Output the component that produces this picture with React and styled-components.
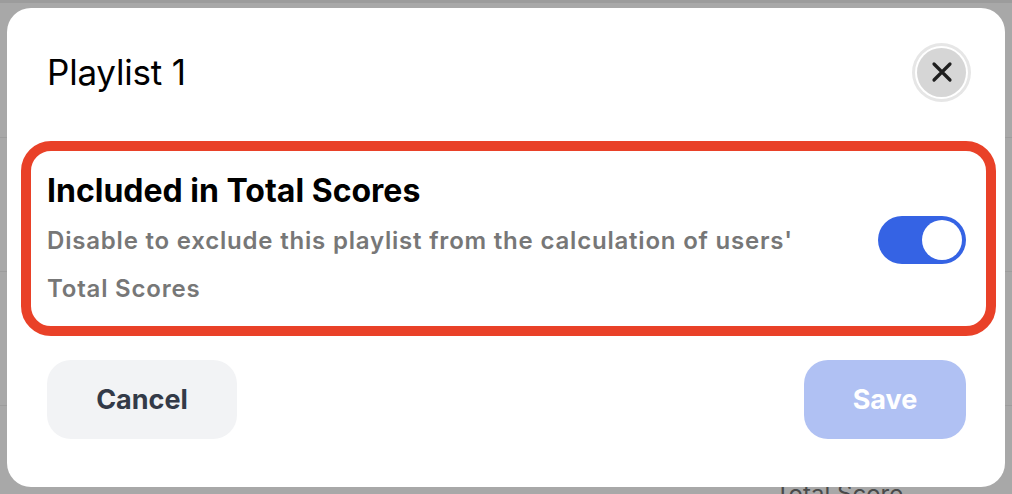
import styled, { createGlobalStyle } from 'styled-components'

const Global = createGlobalStyle`
    html, body {
        margin: 0;
        padding: 0;
        background: #a8a8a8;
        font-family: Inter, "Noto Sans", sans-serif;
    }
`

const Page = styled.div`
    position: relative;
    width: 1012px;
    height: 494px;
    overflow: hidden;
    background: #a8a8a8;
`

const TopStrip = styled.div`
    height: 3px;
    background: #9c9c9c;
`

const BackRow = styled.div`
    height: ${({ h }) => h}px;
    border-bottom: 1px solid #9d9d9d;
    box-sizing: border-box;
`

const BackLabel = styled.div`
    padding-left: 775px;
    margin-top: 73px;
    font-size: 24px;
    color: #4a4a4a;
    white-space: nowrap;
`

const Modal = styled.div`
    position: absolute;
    left: 7px;
    top: 8px;
    width: 998px;
    height: 479px;
    box-sizing: border-box;
    background: #fff;
    border-radius: 24px;
    padding: 40px 39px 0 40px;
    display: flex;
    flex-direction: column;
`

const Header = styled.div`
    display: flex;
    align-items: center;
    justify-content: space-between;
    height: 48px;
`

const Title = styled.h1`
    margin: 0;
    font-size: 35px;
    font-weight: 400;
    color: #000;
    letter-spacing: -0.2px;
`

const CloseButton = styled.button`
    width: 49px;
    height: 49px;
    border: none;
    border-radius: 50%;
    background: #d6d6d6;
    box-shadow: 0 0 0 2px #fff, 0 0 0 5px #e6e6e6;
    display: flex;
    align-items: center;
    justify-content: center;
    padding: 0;
`

const Highlight = styled.div`
    margin: 45px -30px 0 -26px;
    border: 10px solid #e94128;
    border-radius: 30px;
    padding: 21px 20px 13px 16px;
    display: flex;
    align-items: flex-start;
    justify-content: space-between;
`

const TextBlock = styled.div`
    display: flex;
    flex-direction: column;
`

const SettingTitle = styled.div`
    font-size: 32px;
    font-weight: 700;
    color: #000;
    line-height: 38px;
`

const SettingDesc = styled.div`
    margin-top: 7px;
    width: 790px;
    font-size: 24px;
    letter-spacing: 0.8px;
    font-weight: 600;
    color: #777;
    line-height: 48px;
`

const Switch = styled.div`
    margin-top: 44px;
    width: 88px;
    height: 48px;
    border-radius: 24px;
    background: #3563e4;
    display: flex;
    align-items: center;
    justify-content: ${({ on }) => (on ? 'flex-end' : 'flex-start')};
    padding: 4px;
    box-sizing: border-box;
`

const Knob = styled.div`
    width: 40px;
    height: 40px;
    border-radius: 50%;
    background: #fff;
`

const Footer = styled.div`
    margin-top: 24px;
    display: flex;
    justify-content: space-between;
`

const Button = styled.button`
    height: 79px;
    width: ${({ w }) => w}px;
    border: none;
    border-radius: 24px;
    font-family: Inter, "Noto Sans", sans-serif;
    font-size: 27px;
    font-weight: 700;
    background: ${({ primary }) => (primary ? '#b0c1f3' : '#f2f3f5')};
    color: ${({ primary }) => (primary ? '#fff' : '#333a48')};
`

function App() {
    return (
        <>
            <Global />
            <Page>
                <TopStrip />
                <BackRow h={135} />
                <BackRow h={134} />
                <BackRow h={134} />
                <BackLabel>Total Score</BackLabel>
                <Modal>
                    <Header>
                        <Title>Playlist 1</Title>
                        <CloseButton aria-label="Close">
                            <svg width="22" height="22" viewBox="0 0 22 22">
                                <path d="M3 3 L19 19 M19 3 L3 19" stroke="#1e1e1e" strokeWidth="3.2" strokeLinecap="round" />
                            </svg>
                        </CloseButton>
                    </Header>
                    <Highlight>
                        <TextBlock>
                            <SettingTitle>Included in Total Scores</SettingTitle>
                            <SettingDesc>Disable to exclude this playlist from the calculation of users' Total Scores</SettingDesc>
                        </TextBlock>
                        <Switch on>
                            <Knob />
                        </Switch>
                    </Highlight>
                    <Footer>
                        <Button w={190}>Cancel</Button>
                        <Button w={162} primary>Save</Button>
                    </Footer>
                </Modal>
            </Page>
        </>
    )
}

export default App
